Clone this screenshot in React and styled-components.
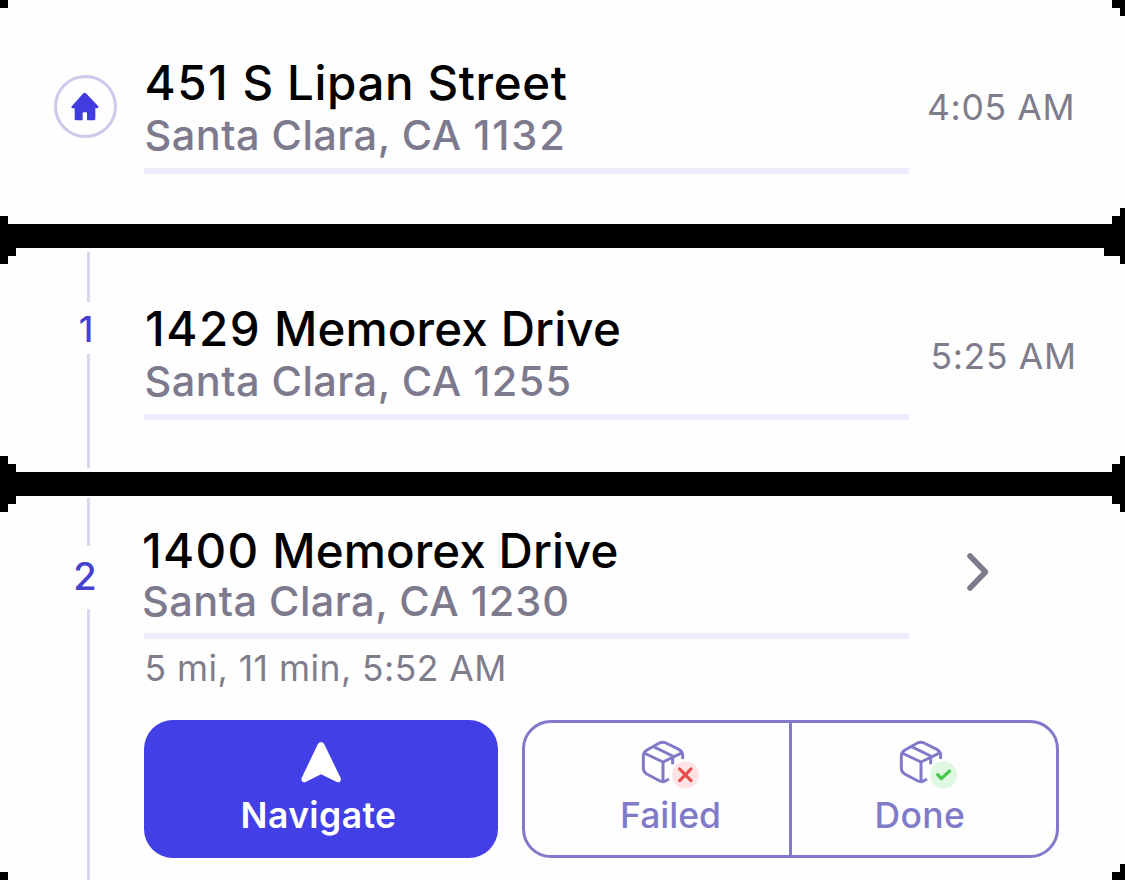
import React from "react";
import styled, { createGlobalStyle } from "styled-components";

const GlobalStyle = createGlobalStyle`
  * { box-sizing: border-box; }
  body { margin: 0; background: #000; font-family: Inter, "Liberation Sans", sans-serif; }
`;

const Screen = styled.main`
  width: 1125px;
  height: 880px;
  display: flex;
  flex-direction: column;
  gap: 24px;
  background: #000;
  overflow: hidden;
`;

const Stop = styled.section`
  display: grid;
  grid-template-columns: 144px 765px 1fr;
  height: ${(p) => p.$height}px;
  background: #fefefe;
  clip-path: polygon(${(p) => p.$outline});
`;

const Rail = styled.div`
  display: flex;
  flex-direction: column;
  align-items: center;
  padding: ${(p) => p.$top ?? 0}px 0 0 33px;
`;

const Segment = styled.div`
  width: 3px;
  flex: none;
  height: ${(p) => p.$length}px;
  background: #dad7ec;
`;

const StopNumber = styled.div`
  height: ${(p) => p.$height}px;
  line-height: ${(p) => p.$line}px;
  margin-left: ${(p) => p.$shift}px;
  font-size: ${(p) => p.$size}px;
  font-weight: 500;
  color: #4540cf;
`;

const HomeBadge = styled.div`
  width: 63px;
  height: 63px;
  margin-left: -6px;
  padding: 0 1px 1px 0;
  border: 3px solid #cec8ea;
  border-radius: 50%;
  display: flex;
  align-items: center;
  justify-content: center;
`;

const Details = styled.div`
  display: flex;
  flex-direction: column;
  padding-top: ${(p) => p.$top}px;
`;

const Digits = styled.span`
  letter-spacing: ${(p) => p.$tracking}px;
`;

const Street = styled.h2`
  margin: 0 0 0 ${(p) => p.$indent ?? 0}px;
  height: 56px;
  line-height: 56px;
  font-size: 47.5px;
  font-weight: 500;
  letter-spacing: ${(p) => p.$tracking}px;
  white-space: nowrap;
  color: #000;
`;

const City = styled.p`
  margin: ${(p) => p.$gap}px 0 0 ${(p) => p.$indent ?? 0}px;
  height: 48px;
  line-height: 48px;
  font-size: 41.5px;
  font-weight: 500;
  letter-spacing: 0.45px;
  white-space: nowrap;
  color: #7d7a8e;
`;

const Rule = styled.div`
  height: 6px;
  margin-top: ${(p) => p.$gap}px;
  background: #eeecfd;
`;

const Trip = styled.p`
  margin: 9px 0 0 0.5px;
  height: 42px;
  line-height: 42px;
  font-size: 35.5px;
  letter-spacing: 0.45px;
  white-space: nowrap;
  color: #7f7d8b;
`;

const Side = styled.div`
  padding: ${(p) => p.$top}px 0 0 ${(p) => p.$left}px;
`;

const Time = styled.time`
  display: block;
  line-height: 42px;
  font-size: 35.5px;
  letter-spacing: 0.65px;
  white-space: nowrap;
  color: #7f7d8b;
`;

const Actions = styled.div`
  display: flex;
  gap: 24px;
  width: 915px;
  height: 138px;
  margin-top: 30px;
`;

const NavigateButton = styled.button`
  width: 354px;
  display: flex;
  flex-direction: column;
  align-items: center;
  padding: 21px 0 0;
  border: 0;
  border-radius: 29px;
  background: #423fe6;
  color: #fff;
  font-family: inherit;
`;

const Outcomes = styled.div`
  flex: 1;
  display: flex;
  border: 3px solid #807ac9;
  border-radius: 29px;
`;

const OutcomeButton = styled.button`
  width: ${(p) => p.$width}px;
  display: flex;
  flex-direction: column;
  align-items: flex-start;
  padding: 16px 0 0 ${(p) => p.$iconLeft}px;
  border: 0;
  border-right: ${(p) => (p.$divided ? "3px solid #807ac9" : "0")};
  background: transparent;
  color: #807ac9;
  font-family: inherit;
`;

const Label = styled.span`
  line-height: 42px;
  margin: ${(p) => p.$gap}px 0 0 ${(p) => p.$shift ?? 0}px;
  font-size: 35.5px;
  font-weight: ${(p) => p.$weight ?? 500};
  letter-spacing: ${(p) => p.$tracking ?? 0}px;
  white-space: nowrap;
`;

function HomeIcon() {
  return (
    <svg width="28" height="29" viewBox="95 96 84 87">
      <path d="M132 100Q136 96 140 100L176 138Q180 145 172 145H168V176Q168 181 163 181H143V160Q143 157 140 157H133Q130 157 130 160V181H110Q106 181 106 176V145H101Q93 145 98 138Z" fill="#403ce0" />
    </svg>
  );
}

function ArrowIcon() {
  return (
    <svg width="44" height="43" viewBox="58 93 132 129">
      <path d="M115 101Q124 91 133 101L183 204Q186 217 173 217L124 193L76 217Q63 217 66 204Z" fill="#fff" />
    </svg>
  );
}

function ParcelIcon({ failed }) {
  return (
    <svg width="60" height="50" viewBox="60 28 180 150" fill="none" strokeLinecap="butt" strokeLinejoin="round">
      <g stroke="#807ac9" strokeWidth="9">
        <path d="M147 148L136 154Q129 158 120 154L80 133Q70 127 70 116V79Q70 68 80 62L118 40Q128 35 138 40L178 60Q188 66 188 77V88" />
        <path d="M72 70L129 97L187 69" />
        <path d="M129 97V156" />
        <path d="M99 50L158 79V104" />
      </g>
      <circle cx="196.500" cy="135.500" r="40.500" fill={failed ? "#fde3e4" : "#e0f7e2"} />
      {failed ? (
        <path d="M179 118L213 153M213 118L179 153" stroke="#eb4a4d" strokeWidth="9.500" strokeLinecap="round" />
      ) : (
        <path d="M179 135L190 147L215 124" stroke="#48c74c" strokeWidth="9.500" strokeLinecap="round" />
      )}
    </svg>
  );
}

function ChevronIcon() {
  return (
    <svg width="24" height="40" viewBox="0 0 24 40" fill="none">
      <path d="M4 4L19.500 20L4 36" stroke="#7d7a8e" strokeWidth="5.500" strokeLinecap="round" strokeLinejoin="round" />
    </svg>
  );
}

const OUTLINES = {
  first: "8px 0, 1112px 0, 1112px 8px, 1120px 8px, 1120px 16px, 1125px 16px, 1125px 208px, 1120px 208px, 1120px 216px, 1112px 216px, 1112px 224px, 8px 224px, 8px 216px, 0 216px, 0 8px, 8px 8px",
  second: "16px 0, 1104px 0, 1104px 8px, 1120px 8px, 1120px 16px, 1125px 16px, 1125px 208px, 1120px 208px, 1120px 216px, 1112px 216px, 1112px 224px, 16px 224px, 16px 216px, 8px 216px, 8px 208px, 0 208px, 0 16px, 8px 16px, 8px 8px, 16px 8px",
  third: "16px 0, 1112px 0, 1112px 8px, 1120px 8px, 1120px 16px, 1125px 16px, 1125px 368px, 1120px 368px, 1120px 376px, 1112px 376px, 1112px 384px, 8px 384px, 8px 376px, 0 376px, 0 16px, 8px 16px, 8px 8px, 16px 8px",
};

export default function App() {
  return (
    <>
      <GlobalStyle />
      <Screen>
        <Stop $height={224} $outline={OUTLINES.first}>
          <Rail $top={75}>
            <HomeBadge><HomeIcon /></HomeBadge>
          </Rail>
          <Details $top={55}>
            <Street $indent={0.5} $tracking={0.6}><Digits $tracking={1.5}>451</Digits> S Lipan Street</Street>
            <City $gap={0} $indent={0.5}>Santa Clara, CA <Digits $tracking={1.9}>1132</Digits></City>
            <Rule $gap={9} />
          </Details>
          <Side $top={87} $left={18}><Time>4:05 AM</Time></Side>
        </Stop>

        <Stop $height={224} $outline={OUTLINES.second}>
          <Rail $top={4}>
            <Segment $length={50} />
            <StopNumber $height={52} $line={55} $size={35} $shift={-5}>1</StopNumber>
            <Segment $length={114} />
          </Rail>
          <Details $top={53}>
            <Street $indent={1} $tracking={0.15}><Digits $tracking={1.5}>1429</Digits> Memorex Drive</Street>
            <City $gap={0} $indent={0.5}>Santa Clara, CA <Digits $tracking={1.3}>1255</Digits></City>
            <Rule $gap={9} />
          </Details>
          <Side $top={88} $left={21.5}><Time>5:25 AM</Time></Side>
        </Stop>

        <Stop $height={384} $outline={OUTLINES.third}>
          <Rail $top={2}>
            <Segment $length={48} />
            <StopNumber $height={63} $line={60} $size={38} $shift={-7}>2</StopNumber>
            <Segment $length={271} />
          </Rail>
          <Details $top={27}>
            <Street $indent={-2} $tracking={0.1}><Digits $tracking={1.3}>1400</Digits> Memorex Drive</Street>
            <City $gap={-2} $indent={-2}>Santa Clara, CA <Digits $tracking={0.9}>1230</Digits></City>
            <Rule $gap={8} />
            <Trip>5 mi, 11 min, 5:52 AM</Trip>
            <Actions>
              <NavigateButton>
                <ArrowIcon />
                <Label $gap={11} $weight={600} $shift={-5} $tracking={0.4}>Navigate</Label>
              </NavigateButton>
              <Outcomes>
                <OutcomeButton $width={267} $iconLeft={115} $divided>
                  <ParcelIcon failed />
                  <Label $gap={6} $shift={-20}>Failed</Label>
                </OutcomeButton>
                <OutcomeButton $width={264} $iconLeft={106}>
                  <ParcelIcon />
                  <Label $gap={6} $shift={-23.5} $tracking={0.4}>Done</Label>
                </OutcomeButton>
              </Outcomes>
            </Actions>
          </Details>
          <Side $top={56} $left={57}><ChevronIcon /></Side>
        </Stop>
      </Screen>
    </>
  );
}
